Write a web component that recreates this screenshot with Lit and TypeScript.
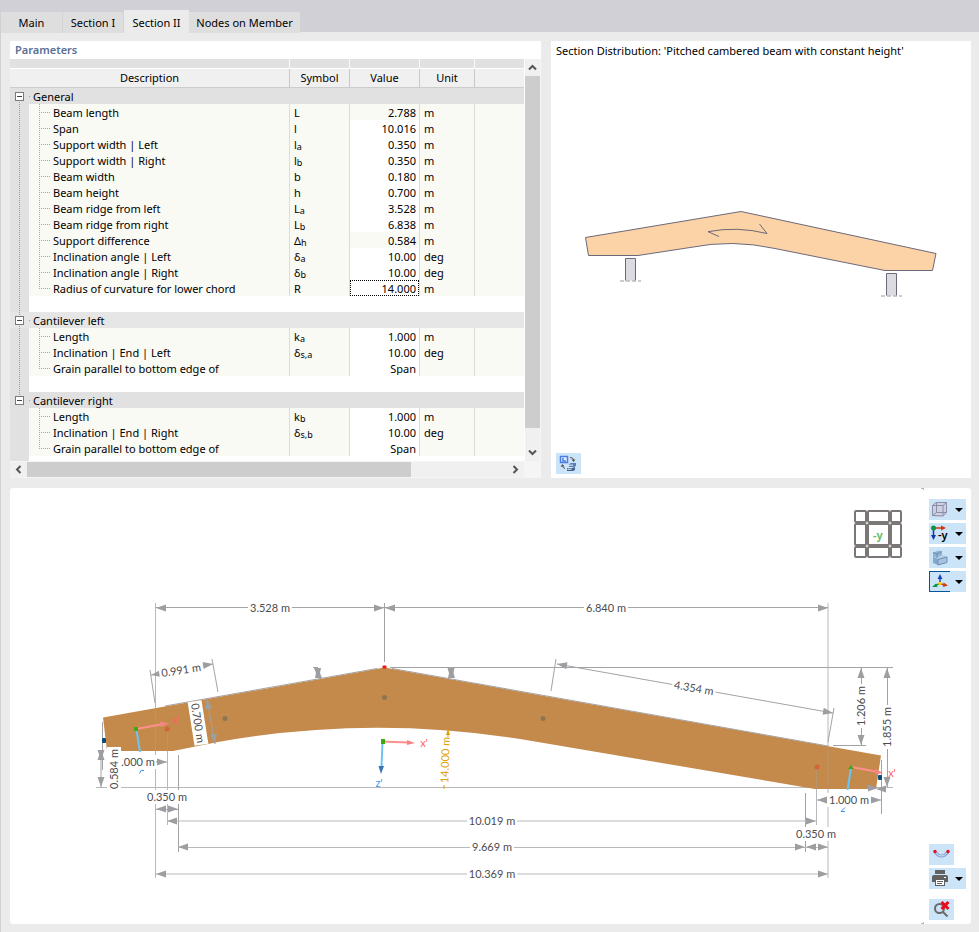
import { LitElement, html, svg, css, nothing } from "lit";
import { customElement, property, state } from "lit/decorators.js";
import { classMap } from "lit/directives/class-map.js";

interface Param {
  name: string;
  base?: string;
  sub?: string;
  value: string;
  unit?: string;
  readonly?: boolean;
}
interface Group {
  title: string;
  rows: Param[];
  light?: boolean;
}

const GROUPS: Group[] = [
  {
    title: "General",
    rows: [
      { name: "Beam length", base: "L", value: "2.788", unit: "m", readonly: true },
      { name: "Span", base: "l", value: "10.016", unit: "m" },
      { name: "Support width | Left", base: "l", sub: "a", value: "0.350", unit: "m" },
      { name: "Support width | Right", base: "l", sub: "b", value: "0.350", unit: "m" },
      { name: "Beam width", base: "b", value: "0.180", unit: "m" },
      { name: "Beam height", base: "h", value: "0.700", unit: "m" },
      { name: "Beam ridge from left", base: "L", sub: "a", value: "3.528", unit: "m" },
      { name: "Beam ridge from right", base: "L", sub: "b", value: "6.838", unit: "m" },
      { name: "Support difference", base: "Δ", sub: "h", value: "0.584", unit: "m", readonly: true },
      { name: "Inclination angle | Left", base: "δ", sub: "a", value: "10.00", unit: "deg" },
      { name: "Inclination angle | Right", base: "δ", sub: "b", value: "10.00", unit: "deg" },
      { name: "Radius of curvature for lower chord", base: "R", value: "14.000", unit: "m" },
    ],
  },
  {
    title: "Cantilever left",
    light: true,
    rows: [
      { name: "Length", base: "k", sub: "a", value: "1.000", unit: "m" },
      { name: "Inclination | End | Left", base: "δ", sub: "s,a", value: "10.00", unit: "deg" },
      { name: "Grain parallel to bottom edge of", value: "Span" },
    ],
  },
  {
    title: "Cantilever right",
    rows: [
      { name: "Length", base: "k", sub: "b", value: "1.000", unit: "m" },
      { name: "Inclination | End | Right", base: "δ", sub: "s,b", value: "10.00", unit: "deg" },
      { name: "Grain parallel to bottom edge of", value: "Span" },
    ],
  },
];

@customElement("param-table")
class ParamTable extends LitElement {
  @state() private closed = new Set<string>();
  @state() private current = "Radius of curvature for lower chord";

  static styles = css`
    :host { display: block; min-width: 0; }
    * { box-sizing: border-box; }
    .frame { display: grid; grid-template-columns: minmax(0, 1fr) 16px; grid-template-rows: 1fr 17px; background: #f5f5f5; }
    .view { overflow: hidden; background: #fff; display: flex; flex-direction: column; border-right: 1px solid #fff; }
    table { width: 100%; table-layout: fixed; border-spacing: 0; border-collapse: separate; }
    .c-gut { width: 19px; } .c-name { width: 261px; } .c-sym { width: 60px; } .c-val { width: 70px; } .c-unit { width: 55px; }
    td, th { padding: 0; height: 16px; line-height: 16px; font-weight: 400; white-space: nowrap; overflow: hidden; }
    td { padding-top: 2px; line-height: 14px; }
    .strip th { height: 10px; line-height: 9px; background: #e1e1e1; border-right: 1px solid #fafafa; border-bottom: 1px solid #fff; }
    .head th { height: 19px; line-height: 18px; background: #f0f0f0; border-right: 1px solid #c8c8c8; border-bottom: 1px solid #cdcdcd; text-align: center; }
    .strip th:last-child, .head th:last-child { border-right: 0; }
    .row td { background-color: #f9faf4; border-right: 1px solid #dcdcdc; }
    .row td:last-child { border-right: 0; }
    .row .gut, .gut { background-color: #e1e1e1; border-right: 0; }
    .group .title, .group .gut { background-color: #e1e1e1; text-align: left; }
    .group.light .title, .group.light .gut { background-color: #e6e6e6; }
    .title { padding-left: 4px; background: repeating-linear-gradient(to right, #a0a0a0 0 1px, transparent 1px 2px) 0 8px / 2px 1px no-repeat; }
    .gut { padding-top: 0; background-repeat: no-repeat; background-size: 1px 100%; background-position: 9px 0; }
    .line { background-image: repeating-linear-gradient(to bottom, #a0a0a0 0 1px, transparent 1px 2px); }
    .from { background-size: 1px 8px; background-position: 9px 8px; }
    .to { background-size: 1px 8px; }
    .toggle { display: block; width: 9px; height: 9px; margin-left: 5px; padding: 0; border: 1px solid #7a7a7a; background: #fff; }
    .toggle svg { display: block; }
    .row .name { padding-left: 24px; background-repeat: no-repeat;
      background-image: repeating-linear-gradient(to bottom, #a8a8a8 0 1px, transparent 1px 2px), repeating-linear-gradient(to right, #a8a8a8 0 1px, transparent 1px 2px);
      background-size: 1px 100%, 11px 1px; background-position: 10px 0, 10px 8px; }
    .row.last .name { background-size: 1px 8px, 11px 1px; }
    .sym, .unit { padding-left: 4px; }
    .row td.edit { background: #fff; }
    .val { text-align: right; padding-right: 3px; }
    .val.edit { padding: 0; }
    sub { font-size: 9px; line-height: 0; vertical-align: -1px; }
    input { display: block; width: 100%; height: 16px; line-height: 13px; padding: 1px 2px 0; border: 1px solid transparent; background: none; font: inherit; color: inherit; text-align: right; outline: none; }
    input.current { border: 1px dotted #000; }
    .fill { display: flex; min-height: 5px; flex: 1; }
    .fill i { width: 19px; background: #e1e1e1; }
    .bar { display: flex; background: #f0f0f0; }
    .bar button { flex: none; width: 17px; height: 17px; padding: 0; border: 0; background: #f0f0f0; display: grid; place-items: center; }
    .v { flex-direction: column; margin-right: 1px; }
    .h { margin: 1px 0; margin-right: 1px; border-top: 0; }
    .h button { height: 15px; }
    .v button { width: 15px; }
    .track { flex: 1; display: flex; }
    .v .track { flex-direction: column; }
    .v .thumb { flex: 352; background: #cdcdcd; } .v .rest { flex: 16; }
    .h .thumb { flex: 384; background: #cdcdcd; } .h .rest { flex: 96; }
  `;

  private toggle(t: string) {
    const next = new Set(this.closed);
    next.has(t) ? next.delete(t) : next.add(t);
    this.closed = next;
  }

  private arrow(d: string, label: string) {
    return html`<button aria-label=${label}><svg width="9" height="9" viewBox="0 0 9 9"><path d=${d} fill="none" stroke="#555" stroke-width="2"/></svg></button>`;
  }

  private group(g: Group, i: number) {
    const last = i === GROUPS.length - 1;
    const open = !this.closed.has(g.title);
    return html`
      <tr class=${classMap({ group: true, light: !!g.light })}>
        <td class=${classMap({ gut: true, line: true, from: i === 0, to: last })}>
          <button class="toggle" aria-expanded=${open} aria-label=${g.title} @click=${() => this.toggle(g.title)}>
            <svg width="7" height="7" viewBox="0 0 7 7"><path d=${open ? "M1 3.5h5" : "M1 3.5h5M3.5 1v5"} stroke="#444"/></svg>
          </button>
        </td>
        <td class="title" colspan="5">${g.title}</td>
      </tr>
      ${open ? g.rows.map((r, n) => html`
        <tr class=${classMap({ row: true, last: n === g.rows.length - 1 })}>
          <td class=${classMap({ gut: true, line: !last })}></td>
          <td class="name">${r.name}</td>
          <td class="sym">${r.base}${r.sub ? html`<sub>${r.sub}</sub>` : nothing}</td>
          ${r.readonly
            ? html`<td class="val">${r.value}</td>`
            : html`<td class="val edit"><input class=${classMap({ current: this.current === r.name })} aria-label=${r.name} .value=${r.value} @focus=${() => (this.current = r.name)}></td>`}
          <td class="unit">${r.unit}</td>
          <td></td>
        </tr>`) : nothing}
      ${last ? nothing : html`<tr><td class="gut line"></td><td colspan="5"></td></tr>`}`;
  }

  render() {
    return html`
      <div class="frame">
        <div class="view">
          <table>
            <colgroup><col class="c-gut"><col class="c-name"><col class="c-sym"><col class="c-val"><col class="c-unit"><col></colgroup>
            <thead>
              <tr class="strip"><th colspan="2"></th><th></th><th></th><th></th><th></th></tr>
              <tr class="head"><th colspan="2">Description</th><th>Symbol</th><th>Value</th><th>Unit</th><th></th></tr>
            </thead>
            <tbody>${GROUPS.map((g, i) => this.group(g, i))}</tbody>
          </table>
          <div class="fill"><i></i></div>
        </div>
        <div class="bar v">
          ${this.arrow("M1 6.5L4.5 3L8 6.5", "Scroll up")}
          <div class="track"><div class="thumb"></div><div class="rest"></div></div>
          ${this.arrow("M1 2.5L4.5 6L8 2.5", "Scroll down")}
        </div>
        <div class="bar h">
          ${this.arrow("M6.5 1L3 4.5L6.5 8", "Scroll left")}
          <div class="track"><div class="thumb"></div><div class="rest"></div></div>
          ${this.arrow("M2.5 1L6 4.5L2.5 8", "Scroll right")}
        </div>
      </div>`;
  }
}

@customElement("section-sketch")
class SectionSketch extends LitElement {
  static styles = css`
    :host { display: flex; min-height: 0; }
    svg { flex: 1; min-width: 0; height: 100%; }
    .edge { stroke: #6c6878; fill: none; }
    .wood { stroke: #6c6878; fill: #fcd3a6; }
    .post { stroke: #6c6878; fill: #dcdbe1; }
    .ground { stroke: #9a98a2; stroke-dasharray: 4 2; fill: none; }
  `;
  render() {
    return html`<svg viewBox="556 61 410 392" role="img" aria-label="Pitched cambered beam">
      <path class="wood" d="M585.5 237.5L741 211.5L936 253.5L932.5 270.5H885L775 248.5Q732 239 690 247.5L638 255.5H588.5Z"/>
      <path class="edge" d="M719 236.5L708 231.7Q737 226 767 233.5L759.5 224"/>
      <path class="post" d="M625.5 280.5V258.5H635.5V280.5M886.5 295.5V273.5H896.5V295.5"/>
      <path class="ground" d="M620 281H641M881 296H902"/>
    </svg>`;
  }
}

interface Label { t: string; x: number; y: number; r?: number; w?: number; c?: string; }

const LABELS: Label[] = [
  { t: "3.528 m", x: 270, y: 608 },
  { t: "6.840 m", x: 606, y: 608 },
  { t: "0.991 m", x: 181, y: 670, r: -9 },
  { t: "4.354 m", x: 694, y: 688, r: 10 },
  { t: "1.206 m", x: 861, y: 706, r: -90 },
  { t: "1.855 m", x: 887, y: 727, r: -90 },
  { t: "0.700 m", x: 198, y: 723, r: 81 },
  { t: ".000 m", x: 138, y: 762, w: 36 },
  { t: "0.584 m", x: 114, y: 769, r: -90 },
  { t: "0.350 m", x: 167, y: 797 },
  { t: "10.019 m", x: 492, y: 821, w: 50 },
  { t: "9.669 m", x: 492, y: 847 },
  { t: "10.369 m", x: 492, y: 874, w: 50 },
  { t: "1.000 m", x: 849, y: 800 },
  { t: "0.350 m", x: 816, y: 834 },
  { t: "14.000 m", x: 445, y: 760, r: -88, w: 48, c: "gold" },
];

/* Arrow tips: position and the direction they point to, in degrees. */
const TIPS: [number, number, number][] = [
  [156, 608, 180], [384, 608, 0], [385, 608, 180], [828, 608, 0],
  [151, 675, 171], [213, 664, -9], [557, 664, 190], [833, 713, 10],
  [861, 668, -90], [861, 745, 90], [887, 668, -90], [887, 787, 90],
  [207, 699, -99], [215, 744, 81], [101, 787, 90], [101, 750, -90], [101, 760, 90], [167, 762, 0],
  [156, 809, 180], [178, 809, 0], [167, 821, 180], [816, 821, 0],
  [178, 847, 180], [805, 847, 0], [806, 847, 180], [828, 847, 0],
  [156, 874, 180], [828, 874, 0], [817, 800, 180], [881, 800, 0],
  [878, 788, 0], [876, 789, 180],
];

const CUBE: [number, number][] = [[855, 11], [868, 21], [891, 10]];
const CUBE_Y: [number, number][] = [[511, 11], [524, 21], [547, 10]];

@customElement("beam-view")
class BeamView extends LitElement {
  static styles = css`
    :host { display: block; min-width: 0; }
    svg { display: block; width: 100%; height: auto; }
    .wood { fill: #c48a4c; }
    .thin { stroke: #b9b9bb; fill: none; }
    .dim { stroke: #a3a2a5; fill: none; }
    .tip { fill: #9e9da1; }
    .edge { stroke: #a6a3a5; fill: none; }
    .mask { fill: #fff; }
    .text { font-family: Lato, "Noto Sans", sans-serif; font-size: 11px; fill: #4c4c50; text-anchor: middle; }
    .text.gold, .gold { fill: #dfa000; }
    .goldline { stroke: #dfa000; fill: none; }
    .pink { stroke: #ff8f8f; stroke-width: 2; fill: none; }
    .pinktip { fill: #f58484; }
    .text.red { fill: #ff6060; }
    .sky { stroke: #6cc4f2; stroke-width: 2; fill: none; }
    .text.blue { fill: #3a95f2; }
    .bluetip { fill: #3b74b4; }
    .green { fill: #3fa812; }
    .node { fill: #8c7654; }
    .sup { fill: #d4643a; }
    .end { fill: #0d4b7c; }
    .peak { fill: #f11414; }
    .cube { fill: #fff; stroke: #7b7776; stroke-width: 2; }
    .cubetext { font-size: 11px; font-weight: 700; fill: #6dbb6d; text-anchor: middle; }
  `;
  private label(l: Label) {
    const w = l.w ?? 44;
    return svg`<g transform="translate(${l.x} ${l.y}) rotate(${l.r ?? 0})">
      <rect class="mask" x=${-w / 2} y="-7" width=${w} height="14"/>
      <text class="text ${l.c ?? ""}" y="4">${l.t}</text></g>`;
  }
  render() {
    return html`<svg viewBox="10 488 914 436" role="img" aria-label="Beam with dimensions">
      <path class="thin" d="M96 787.5H893M155.500 603V878M828 603V878M167.5 751V825M816.5 788V825"/>
      <path class="wood" d="M103 717.5L384.5 667.5L881 755.5L876 789H815L532 741A907 907 0 0 0 218 742L173 751H107Z"/>
      <path class="edge" d="M165 706L377 668.500M392 668.500L828 746"/>
      <path class="dim" opacity="0.35" d="M155.500 708V751M167.500 729V751M828 745V785M816.500 767V789"/>
      <path class="dim" d="M156 607.500H828M384.500 603V662M390 667.500H893M833 745.500H866M861.500 668V745M887.500 668V787
        M150 670L155 703M212 659L218 692M151 675L213 664M556 659L551 691M834 708L828 742M557 664L833 713
        M102.500 722V770M101 750V787M178.500 755V852M805.500 793V852M881.500 760V814M150 762H167M156 809.500H178
        M817 800H881M207 699L215 744M313 667.500H318M446 667.500H451"/>
      <path class="thin" d="M167 821H816M178 847.500H828M156 874H828"/>
      ${TIPS.map(([x, y, a]) => svg`<path class="tip" transform="translate(${x} ${y}) rotate(${a})" d="M0 0L-10 -3.500V3.500Z"/>`)}
      <path class="tip" d="M314 668H321L320 673L322 678H315L316 673ZM447.500 668H454.500L453.500 673L455 678H448L449 673Z"/>
      ${LABELS.map((l) => this.label(l))}
      <path class="goldline" d="M448 729V737M444 785V789"/>
      <path class="gold" d="M448 729L450 735H446Z"/>
      <circle class="node" cx="384.500" cy="697.500" r="2.500"/>
      <circle class="node" cx="543" cy="718.500" r="2.500"/>
      <circle class="node" cx="225" cy="718.500" r="2.500"/>
      <circle class="sup" cx="167" cy="729" r="2.500"/>
      <circle class="sup" cx="817" cy="767" r="2.500"/>
      <rect class="end" x="102" y="738" width="4" height="5" rx="1"/>
      <rect class="end" x="878" y="775" width="4" height="5" rx="1"/>
      <rect class="peak" x="382.500" y="665.500" width="4" height="3" rx="1"/>
      <path class="pink" d="M382 741.500L408 742.500M136 729L161 724.500M851 767L876 771.500"/>
      <path class="pinktip" d="M415 743L407 740V745ZM169 723.500L160 721.500L161 727ZM883 773L875 774.500L876 769Z"/>
      <path class="sky" d="M382.500 742L381.500 767M136.500 730L140 752M851 768L847.500 790"/>
      <path class="bluetip" d="M381 774L378.500 766H384Z"/>
      <rect class="green" x="381" y="739" width="4" height="5"/>
      <rect class="green" x="134" y="727" width="4" height="4"/>
      <path class="green" d="M848 769L851 765L854 769Z"/>
      <text class="text red" x="424" y="747">x'</text>
      <text class="text red" x="176" y="724">x'</text>
      <text class="text red" x="892" y="777">x'</text>
      <text class="text blue" x="379" y="787">z'</text>
      <path stroke="#3a95f2" fill="none" d="M139.500 773.500L141 770.500H144M845 807.500L841 811.500H845"/>
      ${CUBE.map(([x, w]) => CUBE_Y.map(([y, h]) => svg`<rect class="cube" x=${x} y=${y} width=${w} height=${h} rx="1"/>`))}
      <text class="cubetext" x="878" y="539">-y</text>
      <path class="thin" d="M921 488.500H924M921 923.500H924M923.500 488V490M923.500 922V924"/>
    </svg>`;
  }
}

@customElement("tool-button")
class ToolButton extends LitElement {
  @property() label = "";
  @property({ type: Boolean }) menu = false;
  @property({ type: Boolean }) active = false;
  static styles = css`
    :host { display: block; }
    button { box-sizing: border-box; display: flex; align-items: center; width: 25px; height: 21px; padding: 0; border: 0; background: #cce4f7; }
    button.menu { width: 37px; }
    .icon { box-sizing: border-box; display: grid; place-items: center; width: 25px; height: 21px; }
    .menu .icon { width: 21px; }
    .active .icon { border: 1px solid #00549c; border-right: 0; }
    .caret { width: 0; margin-left: 5px; border: 4px solid transparent; border-top: 4px solid #000; border-bottom: 0; }
  `;
  render() {
    return html`<button class=${classMap({ menu: this.menu, active: this.active })} aria-label=${this.label} title=${this.label}>
      <span class="icon"><slot></slot></span>${this.menu ? html`<span class="caret"></span>` : nothing}
    </button>`;
  }
}

@customElement("app-root")
class AppRoot extends LitElement {
  @state() private tab = "Section II";

  static styles = css`
    :host { display: block; min-height: 100vh; box-sizing: border-box; background: #ebebeb; border-left: 1px solid #d1d0d6;
      font-family: "Noto Sans", "Open Sans", sans-serif; font-size: 11px; color: #000; }
    * { box-sizing: border-box; }
    .tabs { display: flex; align-items: flex-end; height: 33px; background: linear-gradient(#d1d0d6 32px, #ebebeb 32px); }
    .tab { height: 21px; padding: 0; border: 0; border-right: 1px solid #d4d4d6; background: #dedede; font: inherit; color: inherit; width: 61px; white-space: nowrap; }
    .tab:first-child { width: 62px; }
    .tab.on { height: 23px; padding-top: 2px; background: #ebebeb; border: 0; width: 65px; }
    .tab.wide { width: 111px; border: 0; }
    .page { display: grid; grid-template-columns: 531fr 420fr; gap: 10px; padding: 8px 8px 8px 9px; }
    .card { background: #fff; min-width: 0; }
    h2 { margin: 0; padding-left: 5px; height: 18px; line-height: 18px; font-size: 11px; font-weight: 600; color: #5a6f95; }
    .sketch { display: flex; flex-direction: column; padding: 0 5px 4px; }
    .sketch p { margin: 0; line-height: 20px; white-space: nowrap; }
    .sketch section-sketch { flex: 1; height: 0; }
    .model { grid-column: 1 / -1; display: flex; border-radius: 3px; }
    .model beam-view { flex: 1; }
    .tools { display: flex; flex-direction: column; gap: 3px; width: 47px; padding: 11px 5px 4px; }
    .push { margin-top: auto; }
    .gap { margin-top: 7px; }
    tool-button svg { display: block; }
  `;

  render() {
    const tabs = ["Main", "Section I", "Section II", "Nodes on Member"];
    return html`
      <nav class="tabs" role="tablist">
        ${tabs.map((t) => html`<button role="tab" aria-selected=${t === this.tab} @click=${() => (this.tab = t)}
          class=${classMap({ tab: true, on: t === this.tab, wide: t.length > 10 })}>${t}</button>`)}
      </nav>
      <main class="page">
        <section class="card"><h2>Parameters</h2><param-table></param-table></section>
        <section class="card sketch">
          <p>Section Distribution: 'Pitched cambered beam with constant height'</p>
          <section-sketch></section-sketch>
          <tool-button label="Switch view">
            <svg width="19" height="17" viewBox="0 0 19 17"><rect x="1.500" y="1.500" width="7" height="6" fill="#e4edff" stroke="#4a7de6" stroke-width="1.500"/><path d="M4 3V6H7" fill="none" stroke="#4a7de6" stroke-width="1.500"/>
              <path d="M11 2.500Q14.500 2.500 14.500 5M3.500 11Q4 13 6 13.500" fill="none" stroke="#555"/><path d="M12.500 4.500H16.500L14.500 7ZM1.500 11.500L3.500 9L5.500 11.500Z" fill="#555"/>
              <path d="M10 9L12 8H17V11L15 12H10Z" fill="#5b7fb0"/><path d="M8 13H13L16 12V15L14 16H8Z" fill="#44638f"/><path d="M10 9.500H14V11H10ZM8.500 13.500H12.500V15H8.500Z" fill="#b7cbe4"/></svg>
          </tool-button>
        </section>
        <section class="card model">
          <beam-view></beam-view>
          <div class="tools">
            <tool-button label="Display mode" menu>
              <svg width="17" height="17" viewBox="0 0 17 17"><path d="M1 4.500L5 1.500H16V12L12 15.500H1Z" fill="#cdd0e2"/><path d="M1.500 4.500H12V15L1.500 14.500ZM1.500 4.500L5 1.500H15.500L12 4.500M15.500 1.500V11.500L12 15M5.500 1.500V11.500M5.500 11.500H15.500M5.500 11.500L1.500 14.500" fill="none" stroke="#8b8fa8"/></svg>
            </tool-button>
            <tool-button label="View direction" menu>
              <svg width="19" height="19" viewBox="0 0 19 19"><path d="M3.500 4V11" stroke="#1136b0" stroke-width="1.500"/><path d="M1 11H6L3.500 16Z" fill="#1136b0"/><path d="M4 4H11" stroke="#d23a0c" stroke-width="1.500"/><path d="M11 1.500V6.500L16 4Z" fill="#d23a0c"/><circle cx="3.500" cy="4" r="2.500" fill="#0b9444"/><text x="8" y="15" font-size="11" font-weight="600" font-family="Noto Sans, sans-serif">-y</text></svg>
            </tool-button>
            <tool-button label="Rendering" menu>
              <svg width="17" height="17" viewBox="0 0 17 17"><path d="M2 3.500L8 1.500L11 2.500V8L6 9L2 8Z" fill="#91b3d4"/><path d="M2 8L6 9L7 11L16 9V7L11 6L6 8" fill="#b4cfe8"/><path d="M7 10.500L16 8V13.500L7 16Z" fill="#a5c3e0"/><path d="M2 8L7 10V16L2 14Z" fill="#84a8ca"/><path d="M2 3.500L6 5V9M6 5L11 2.500M7 10.500L16 8V13.500L7 16Z" fill="none" stroke="#6c8fb2"/></svg>
            </tool-button>
            <tool-button label="Axes" menu active>
              <svg width="18" height="17" viewBox="0 0 18 17"><path d="M9 10V5" stroke="#1747c0" stroke-width="1.500"/><path d="M6.500 6H11.500L9 1Z" fill="#1747c0"/><path d="M9 10.500L4 12.500" stroke="#0b9444" stroke-width="1.500"/><path d="M1 14L5 10.500L6.500 14Z" fill="#0b9444"/><path d="M9 10.500L13 12" stroke="#d23a0c" stroke-width="1.500"/><path d="M17 12.500L12.500 9.500L12 14Z" fill="#d23a0c"/><circle cx="9" cy="10.500" r="1.800" fill="#ffcf00"/></svg>
            </tool-button>
            <tool-button class="push" label="Deformation">
              <svg width="17" height="13" viewBox="0 0 17 13"><path d="M2 4Q8.500 12 15 4" fill="none" stroke="#8aa8d8" stroke-width="3"/><path d="M2 4Q8.500 12 15 4" fill="none" stroke="#cfdef2"/><circle cx="2" cy="3.500" r="1.700" fill="#e80f1f"/><circle cx="15" cy="3.500" r="1.700" fill="#e80f1f"/></svg>
            </tool-button>
            <tool-button label="Print" menu>
              <svg width="17" height="17" viewBox="0 0 17 17"><path d="M4 0H14V4H4ZM1 7Q1 5 3 5H15Q17 5 17 7V12H1Z" fill="#606060"/><rect x="4.500" y="9.500" width="9" height="6" fill="#fff" stroke="#606060"/><path d="M6 11.500H12M6 13.500H11" stroke="#606060"/><path d="M13 7.500H15" stroke="#fff"/></svg>
            </tool-button>
            <tool-button class="gap" label="Reset zoom">
              <svg width="17" height="17" viewBox="0 0 17 17"><circle cx="6.500" cy="7.500" r="4.500" fill="none" stroke="#6a6a6a" stroke-width="2"/><path d="M10 11L14.500 15.500" stroke="#6a6a6a" stroke-width="2"/><path d="M8.500 1L15.500 8M15.500 1L8.500 8" stroke="#ec0b1c" stroke-width="3"/></svg>
            </tool-button>
          </div>
        </section>
      </main>`;
  }
}
